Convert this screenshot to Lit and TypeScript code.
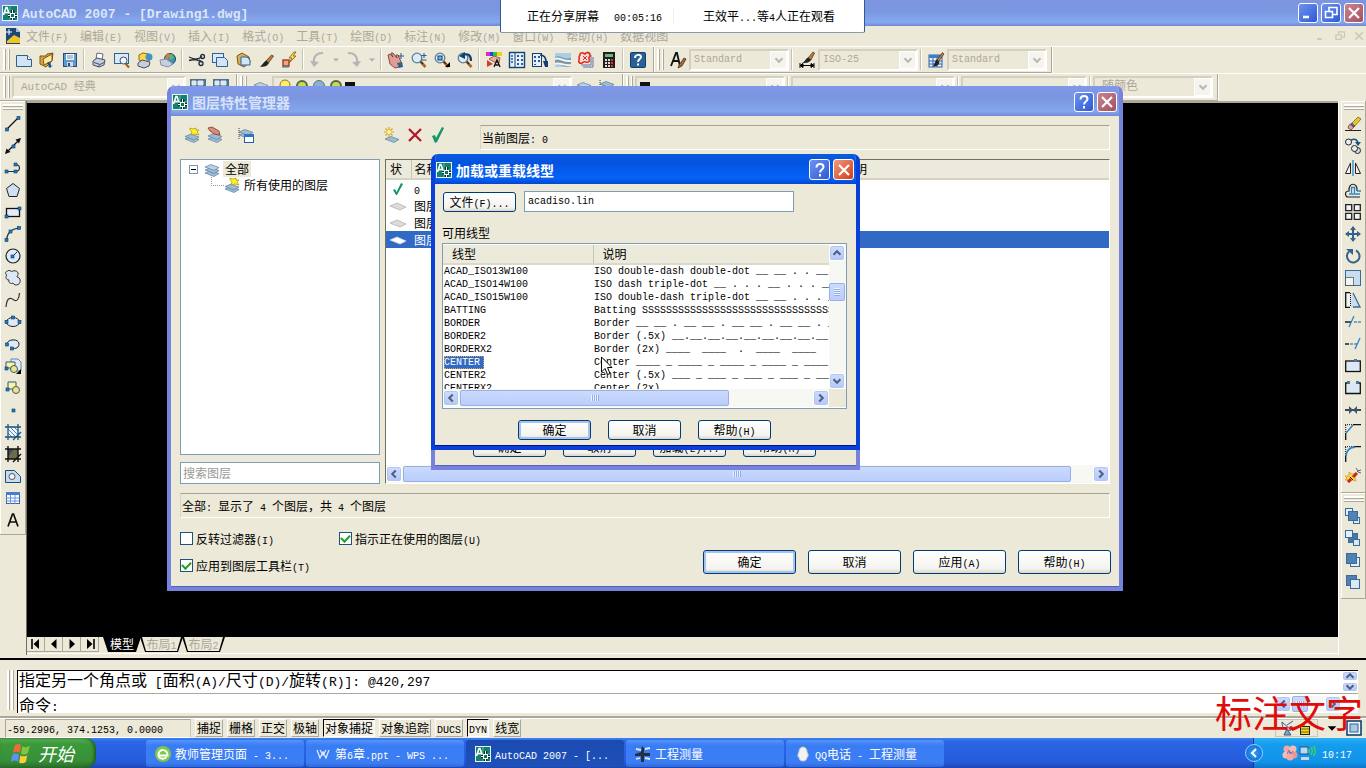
import { LitElement, html, svg, css } from "lit";
import { customElement } from "lit/decorators.js";
import { classMap } from "lit/directives/class-map.js";

/* Latin runs use the narrow fixed-width face, everything else the CJK face. */
const t = (s: string) =>
  s
    .split(/([\x20-\x7e]+)/)
    .filter(Boolean)
    .map((p) => (/^[\x20-\x7e]/.test(p) ? html`<span class="l">${p}</span>` : p));

const N = "#0b3a66";
const dot = (x: number, y: number) =>
  svg`<rect x=${x} y=${y} width="3" height="3" fill="#1b7fc4" stroke=${N} stroke-width=".6"/>`;
const sheet = (x: number, y: number, w: number, h: number) =>
  svg`<rect x=${x} y=${y} width=${w} height=${h} fill="#dbe9fa" stroke="#2e6295"/>`;
const lens = (extra: unknown) => svg`
  <path d="M9 9l5.500 6" stroke="#a8672a" stroke-width="2.600"/><path d="M9 9l3 3" stroke="#3b2a1a" stroke-width="1.200"/>
  <circle cx="6" cy="6" r="4.800" fill="#dcebf8" stroke="#5d7f96" stroke-width="1.300"/>${extra}`;
const brush = svg`<path d="M8 9l6.500-8.500 1.500 1.500-6 8z" fill="#c07a3c" stroke="#4a2c12" stroke-width=".7"/><path d="M9 7.500l2.500 2.500c-1 4-4 5-7 4.500 2-1 2-5 4.500-7z" fill="#222"/>`;
const layer = (y: number, f = "#9dbbd6", s = "#5c7f9e") =>
  svg`<path d=${`M1 ${y}l6-2.500 8 3-5 3z`} fill=${f} stroke=${s} stroke-width=".7"/>`;
const burst = svg`<path d="M6 1l3 1 3-1v2h3l-2 2 2 3-4-1-4 1 1-3-2-2z" fill="#fff02a" stroke="#a89400" stroke-width=".7"/>`;
const cube = (x: number, y: number, s: number, f: string) =>
  svg`<rect x=${x} y=${y} width=${s} height=${s} fill=${f} stroke="#3b6c99"/>`;

const art: Record<string, unknown> = {
  acad: svg`<rect x=".5" y=".5" width="15" height="15" fill="#14806f" stroke="#e8f4f0"/><path d="M8 1v14M1 8h14" stroke="#5fd0bd" stroke-width=".8"/>
    <path d="M1.500 10L4 2.500h1l2.500 7.500M2.500 7.500h4.500" stroke="#fff" stroke-width="1.600" fill="none"/><path d="M10.500 5v10M6 10.500h9" stroke="#06312c" stroke-width="3.600"/><path d="M10.500 5v10M6 10.500h9" stroke="#fff"/><rect x="8.500" y="8.500" width="4" height="4" fill="#0e6f62" stroke="#fff"/>`,
  dwg: svg`<path d="M1 0h10l4 4v12H1z" fill="#1c4878"/><path d="M11 0l4 4h-4z" fill="#9fc0dc"/><path d="M4 1v6M1 4h6" stroke="#fff"/><path d="M2 13l7-6 6 3v5H2z" fill="#f2c422"/>`,
  new: svg`<path d="M.5 3.500h11l4 4v7H.5z" fill="#d2e4f5" stroke="#315f89"/><path d="M11.500 3.500v4h4" fill="#fff" stroke="#315f89"/>`,
  open: svg`<path d="M1 4h6l1-2 6-1-1 8-6 6-6-3z" fill="#d9a845" stroke="#7b5716"/><path d="M4 7l9-5v7l-8 4z" fill="#ffe79c" stroke="#7b5716"/><path d="M8 11c2-2 4-1 4 3l2-1-3 3-3-3 2 1" fill="#1d5182"/>`,
  save: svg`<rect x="1.500" y="1.500" width="13" height="13" fill="#5f9ace" stroke="#234f7c"/><rect x="4" y="2" width="8" height="6" fill="#edf5fc"/><path d="M5 4h6M5 6h6" stroke="#88a"/><rect x="5" y="10" width="6" height="4.500" fill="#cfdceb"/><rect x="6" y="11" width="2" height="3" fill="#234f7c"/>`,
  print: svg`<path d="M5 7l1-6 6 1-1 6z" fill="#fff" stroke="#668"/><path d="M2 9l4-3 8 2-1 5-5 2-6-2z" fill="#c6cee0" stroke="#47506b"/><path d="M3 10.500l6 2 4-2M8 13v2" stroke="#47506b" fill="none"/>`,
  preview: svg`${sheet(0.5, 1.5, 14, 10)}<path d="M11 11l4 4.500" stroke="#9a5b27" stroke-width="2"/><circle cx="9.500" cy="8.500" r="3.500" fill="#f3f8fd" stroke="#38566f"/>`,
  publish: svg`<path d="M2 3l4-2 6 1 1 6-6 3-5-3z" fill="#ffd744" stroke="#8a6b0b"/><circle cx="12" cy="5" r="3.500" fill="#3d94c6"/><path d="M1 11l4-3 8 2-1 4-5 2-6-2z" fill="#c6cee0" stroke="#47506b"/>`,
  globe: svg`<circle cx="10" cy="7" r="5.500" fill="#3795bb" stroke="#246"/><path d="M8 3l4-1 2 4-4 2z" fill="#68b35c"/><path d="M7 1l3 1-3 6-2-1z" fill="#e2773b"/><path d="M0 8l6-1 7 5-5 3-7-2z" fill="#c6cee0" stroke="#8790a8"/>`,
  cut: svg`<path d="M0 5l10 4M0 8.500l10-2M10 6.500l3-2M10 8l3 2" stroke="#1c2b3d" stroke-width="1.300"/><circle cx="13.500" cy="4.500" r="2" fill="none" stroke="#1c2b3d" stroke-width="1.300"/><circle cx="12" cy="11.500" r="2" fill="none" stroke="#1c2b3d" stroke-width="1.300"/>`,
  copy: svg`${sheet(0.5, 1.5, 11, 9)}<path d="M4.500 5.500h8l3 3v6h-11z" fill="#d2e4f5" stroke="#2e6295"/>`,
  paste: svg`<path d="M2 4l5-3 7 4 1 5-6 5-6-3z" fill="#d5b25a" stroke="#7b5716"/><path d="M6 5h6l3 3v5H6z" fill="#d2e4f5" stroke="#2e6295"/>`,
  match: svg`<path d="M8 9l5.500-6 2 1-5 7z" fill="#c07a3c" stroke="#4a2c12" stroke-width=".7"/><path d="M8 8.500l3 2.500c-2 4-6 4-9 3.500 2-1 3-4 6-6z" fill="#222"/>`,
  block: svg`<rect x="2" y="8" width="6" height="6" fill="#f8a27c" stroke="#9a3f1f" stroke-width="1.400"/><path d="M1 15h7" stroke="#1b7fc4"/><path d="M13 0l-5 6h3l-3 5 7-7h-3l3-4z" fill="#ffe23c" stroke="#7b5716" stroke-width=".8"/>`,
  undo: svg`<path d="M13 1C6 1 3 5 4 12" fill="none" stroke="#b4b4b9" stroke-width="2.200"/><path d="M0 9l4 6 5-5z" fill="#b4b4b9"/>`,
  redo: svg`<path d="M2 1c7 0 10 4 9 11" fill="none" stroke="#b4b4b9" stroke-width="2.200"/><path d="M15 9l-4 6-5-5z" fill="#b4b4b9"/>`,
  down: svg`<path d="M4 6h8L8 10z" fill="#a9adb8"/>`,
  pan: svg`<path d="M0 3l2-1 3 3-2-4h2l4 5-1-3h2l4 9-3 3-4 1-5-4z" fill="#e39c93" stroke="#7a3c3a" stroke-width=".9"/><path d="M9 11l5-1 1 5-4 1z" fill="#2b6196"/><path d="M13 1v6M10 4h6" stroke="#23588e"/>`,
  zoomrt: lens(svg`<path d="M13 1v5M10.500 3.500h5M10.500 8h5" stroke="#23588e"/>`),
  zoomwin: lens(svg`<rect x="4" y="4" width="4" height="4" fill="#7fb0da" stroke="#0f3c68"/><path d="M11 15h5v-5z" fill="#000"/>`),
  zoomprev: lens(svg`<path d="M14 9C14 3 11 1 6 3" fill="none" stroke="#133f6d" stroke-width="2.200"/><path d="M8 0L2 4l6 3z" fill="#133f6d"/>`),
  props: svg`<path d="M0 0h4v4H0z" fill="#e325c8"/><path d="M4 0h3v4H4z" fill="#2440e8"/><path d="M7 0h4v4H7z" fill="#2cc843"/><path d="M11 0h5v4h-5z" fill="#f4d019"/><path d="M3 7l5-3 6 2-1 5-5-1z" fill="#eab39e" stroke="#7a4a3a" stroke-width=".8"/><path d="M1 8l6 4-6 3z" fill="#d63a2d"/><path d="M8 15l3-7 3 7M9.500 13h3" stroke="#111" stroke-width="1.300" fill="none"/>`,
  dcenter: svg`<rect x=".5" y=".5" width="15" height="15" fill="#e8f1fb" stroke="#173f70" stroke-width="1.400"/><path d="M6 1v14" stroke="#173f70"/><path d="M2 4h2M2 7h2M2 10h2" stroke="#1b5f9c" stroke-width="1.500"/><path d="M8 3h2v2H8zM12 3h2v2h-2zM8 7h2v2H8zM12 7h2v2h-2zM8 11h2v2H8zM12 11h2v2h-2z" fill="#1b5f9c"/>`,
  tools: svg`<rect x=".5" y="1.500" width="9" height="13" fill="#e8f1fb" stroke="#173f70"/><path d="M2 4h2v2H2zM2 8h2v2H2zM6 4h2v2H6zM6 8h2v2H6zM2 12h2v1H2z" fill="#1b5f9c"/><path d="M8 3c4 0 6 2 6 7" stroke="#173f70" stroke-width="1.700" fill="none"/><path d="M11 9h5v6h-3z" fill="#173f70"/>`,
  sheets: svg`<rect y="1" width="16" height="14" fill="#a9cfe5"/><path d="M0 5c5-3 8 3 16 1v8c-7 3-10-3-16-1z" fill="#7d98a4"/><path d="M0 7c5-2 8 3 16 2M0 12c5-2 8 2 16 1" stroke="#f1f5f7" stroke-width="2" fill="none"/>`,
  markup: svg`<path d="M5 15h10V5M3 13h10V3" stroke="#5f6ea8" fill="none"/><path d="M2 2c2-3 4 0 5 0 1-2 5-2 5 1s-2 2-1 4 0 4-3 3-2 0-4 1-4-1-3-3-1-3 1-5z" fill="#ffdcd6" stroke="#e12b22" stroke-width="1.600"/><path d="M5 4l4 4M9 4L5 8" stroke="#e12b22"/>`,
  calc: svg`<rect x="2" y="0" width="12" height="16" fill="#201d1d"/><rect x="4" y="2" width="8" height="3" fill="#63bb73"/><path d="M4 7h2v2H4zM7 7h2v2H7zM4 10h2v2H4zM7 10h2v2H7zM4 13h2v2H4zM7 13h2v2H7z" fill="#ddd"/><path d="M10 7h2v2h-2zM10 10h2v2h-2zM10 13h2v2h-2z" fill="#d33"/>`,
  help: svg`<rect x=".5" y=".5" width="15" height="15" rx="1" fill="#2a6098" stroke="#123d69"/><path d="M5 6c0-4 6-4 6-1 0 2-3 2-3 5M8 11.500v2" stroke="#fff" stroke-width="2" fill="none"/>`,
  textstyle: svg`<path d="M1 14L6 1h1l3 13M3 9h6" stroke="#111" stroke-width="1.800" fill="none"/><path d="M9 13l5-7 2 1-4 7-4 2z" fill="#a96a33" stroke="#33200f" stroke-width=".7"/>`,
  dimstyle: svg`<path d="M1 11v5M15 11v5M1 13.500h14M4 11.500l-3 2 3 2zM12 11.500l3 2-3 2z" stroke="#000" fill="#000"/><path d="M9 6l5-6 1.500 1L12 8z" fill="#c07a3c" stroke="#4a2c12" stroke-width=".7"/><path d="M9 5.500l3 2.500c-2 3-5 3-9 3 3-1 3-4 6-5.500z" fill="#222"/>`,
  tabstyle: svg`<rect x="1" y="3" width="13" height="12" fill="#e7f0fb" stroke="#2c64ab"/><path d="M1 3h13v3H1z" fill="#3f7dc6"/><path d="M1 9h13M1 12h13M5 6v9M9 6v9" stroke="#2c64ab"/>${brush}`,
  gear: svg`<rect width="16" height="16" fill="#4d7292"/><path d="M2 2h4v4H2zM8 2h5v4H8zM3 9h10" fill="#dce8f2" stroke="#dce8f2"/>`,
  line: svg`<path d="M2 13L13 2" stroke="#111" stroke-width="1.200"/>${dot(0.5, 12)}${dot(12, 0.5)}`,
  xline: svg`<path d="M1 15L15 1" stroke="#111" stroke-width="1.200"/><path d="M0 16l1.500-5.500L5.500 14zM16 0l-5.500 1.500L14 5.500z" fill="#111"/>${dot(7, 7)}`,
  pline: svg`<path d="M1 11.500h9c6 0 6-7 0-7" stroke="#234" fill="none" stroke-width="1.200"/>${dot(0, 10)}${dot(9, 10)}${dot(9, 3)}`,
  polygon: svg`<path d="M8 1.500l6.500 5-2.500 8H4l-2.500-8z" fill="#cfe0f4" stroke="#222"/>`,
  rect: svg`<rect x="1.500" y="4.500" width="13" height="8" fill="#e3edf9" stroke="#111" stroke-width="1.300"/>${dot(0, 11)}${dot(13, 3)}`,
  arc: svg`<path d="M1.500 14C2 7 6 3 14 2" stroke="#333" fill="none" stroke-width="1.200"/>${dot(0, 12.5)}${dot(4, 4)}${dot(12.5, 0.5)}`,
  circle: svg`<circle cx="8" cy="8" r="7" fill="#dfeaf8" stroke="#222" stroke-width="1.200"/><path d="M8 8l4-4" stroke=${N}/>${dot(6, 7)}`,
  cloud: svg`<path d="M2.500 1c2-1.500 3.500 0 4 1 1-2 6-1.500 6.500 1 .5 2-1 3-1 4 3.500 0 4.500 6 1 7.500-2 1-4 .5-5-1.500-2 1-5 0-4-3-3 0-4-3-2-5-2.500-1-1.500-3.500.5-4z" fill="#dce8f6" stroke="#333"/>`,
  spline: svg`<path d="M1 15C2 4 6 6 9 8s5-1 5.500-7" fill="none" stroke="#333" stroke-width="1.200"/>`,
  ellipse: svg`<ellipse cx="8" cy="8" rx="6.500" ry="4.500" fill="#dfeaf8" stroke="#222"/>${dot(0, 6.5)}${dot(13, 6.5)}${dot(6.5, 2)}`,
  earc: svg`<path d="M2 8c0-5 12-6 12 0 0 5-6 5-7 4" fill="#dfeaf8" stroke="#222"/>${dot(0.5, 7)}${dot(5.5, 11)}`,
  insert: svg`<path d="M6 1h7l3 3v9H6z" fill="#dbe9fa" stroke="#5c86ab"/><path d="M1 4h9v6H1z" fill="#fbf3a0" stroke="#2a5a85"/><circle cx="9" cy="11" r="3.500" fill="#e6e690" stroke="#555"/><path d="M11 16h5v-5z" fill="#000"/>${dot(0, 9)}`,
  makeblk: svg`<path d="M3 2h8v7H3z" fill="#fbf3a0" stroke="#2a5a85"/><circle cx="11" cy="10" r="3.500" fill="#e6e690" stroke="#555"/>${dot(1, 8)}`,
  point: svg`${dot(7, 7)}`,
  hatch: svg`<rect x="3" y="3" width="10" height="10" fill="#eef5fc"/><path d="M3 5l8 8M3 9l4 4M5 3l8 8M9 3l4 4" stroke="#4e88bb"/><path d="M3 0v16M13 0v16M0 3h16M0 13h16M8 16l8-8" stroke="#1b5480" stroke-width="1.300"/>`,
  gradient: svg`<rect x="3" y="3" width="10" height="10" fill="#6f6c4c"/><path d="M3 3h6L3 11z" fill="#404c63"/><path d="M3 0v16M13 0v16M0 3h16M0 13h16M8 16l8-8" stroke="#111" stroke-width="1.400"/>`,
  region: svg`<path d="M.5 2.500h9l6 6v6H.5z" fill="#c8dbf0" stroke="#1b4d7c"/><circle cx="7" cy="8.500" r="3" fill="#eef5fc" stroke="#555"/>`,
  table: svg`<rect x="1.500" y="2.500" width="13" height="11" fill="#fff" stroke="#3563b5"/><path d="M1 2h14v3H1z" fill="#4a7cd0"/><path d="M1 8h13M1 11h13M5.500 5v9M10 5v9" stroke="#6a93d6"/>`,
  mtext: svg`<path d="M3 14.500L7.500 2h1L13 14.500M4.500 10h7" stroke="#111" stroke-width="1.700" fill="none"/>`,
  erase: svg`<path d="M0 14.500h16" stroke="#222"/><path d="M6 8l7-7 3 2-7 8z" fill="#e7c42c" stroke="#6b570d" stroke-width=".7"/><path d="M4 9l3-2 3 3-4 4-3-2z" fill="#f19a92" stroke="#6b3a36" stroke-width=".7"/><path d="M6 8l3 3" stroke="#2e6295" stroke-width="2"/>`,
  copyobj: svg`<circle cx="3.500" cy="4" r="3" fill="#e8f0f8" stroke="#222"/><circle cx="12.500" cy="12.500" r="3" fill="#ccdcec" stroke="#222"/><circle cx="9.500" cy="10.500" r="3" fill="#e8f0f8" stroke="#222"/><path d="M6 2c4-2 7 0 7 4" fill="none" stroke="#1d4f82" stroke-width="1.500"/><path d="M10 4h6l-3 4z" fill="#1d4f82"/>`,
  mirror: svg`<path d="M5.500 3v10.500h-5zM10.500 3v10.500h5z" fill="#eef3f8" stroke="#222"/><path d="M8 0v16" stroke="#2785cc" stroke-width="1.300"/>`,
  offset: svg`<path d="M15 15H3C0 15-1 9 4 9c-1-9 9-9 8 0" fill="none" stroke="#222" stroke-width="1.200"/><path d="M15 12H4M12 9h4M6.500 11V5.500h3V11" fill="none" stroke="#2785cc" stroke-width="1.300"/>`,
  array: svg`<path d="M.7.7h6v6h-6zM9.300.7h6v6h-6zM.7 9.300h6v6h-6zM9.300 9.300h6v6h-6z" fill="#eef3f8" stroke="#222" stroke-width="1.300"/>`,
  move: svg`<path d="M8 1v14M1 8h14" stroke="#33628c" stroke-width="2"/><path d="M8 0l3 4H5zM8 16l3-4H5zM0 8l4-3v6zM16 8l-4-3v6z" fill="#33628c"/>`,
  rotate: svg`<path d="M11 2.500a6.300 6.300 0 1 1-7 1" fill="none" stroke="#33628c" stroke-width="2"/><path d="M1 1h7v6z" fill="#33628c"/>`,
  scale: svg`<rect x=".5" y=".5" width="15" height="15" fill="#c9ddf0" stroke="#3b6c99"/><rect x=".5" y="7.500" width="8" height="8" fill="#f4f4f0" stroke="#111" stroke-dasharray="1 1"/>`,
  stretch: svg`<path d="M5 .7H.7v14.600H5" fill="#eef3f8" stroke="#111" stroke-width="1.300"/><path d="M7 1l8 14H6z" fill="#c9ddf0"/><path d="M5.500 1v14" stroke="#111" stroke-dasharray="1 1"/><path d="M8 1l7 14H8" fill="none" stroke="#3b6c99" stroke-width="1.300"/>`,
  trim: svg`<path d="M0 8h6" stroke="#111" stroke-width="1.400"/><path d="M9 8h7" stroke="#1d5c99" stroke-dasharray="3 1"/><path d="M4 13l5-11" stroke="#2785cc" stroke-width="1.300"/>`,
  extend: svg`<path d="M0 8h4" stroke="#111" stroke-width="1.400"/><path d="M5 8h7" stroke="#1d5c99" stroke-dasharray="3 1"/><path d="M10 13l5-11" stroke="#2785cc" stroke-width="1.300"/>`,
  break1: svg`<rect x=".7" y="3" width="14.600" height="10.500" fill="#dce8f5" stroke="#111" stroke-width="1.300"/><rect x="9" y="1" width="3" height="3" fill="#4678a5"/>`,
  break2: svg`<path d="M3 3H.7v10.500h14.600V3H13" fill="#dce8f5" stroke="#111" stroke-width="1.300"/><rect x="2" y="1" width="3" height="3" fill="#4678a5"/><rect x="11" y="1" width="3" height="3" fill="#4678a5"/>`,
  join: svg`<path d="M0 8h16" stroke="#111" stroke-width="1.500"/><path d="M4 4l4 4-4 4zM12 4L8 8l4 4z" fill="#33557a"/>`,
  chamfer: svg`<path d="M0 .7h8M.7 1v8" stroke="#111" stroke-dasharray="1 1"/><path d="M8 .7h8M.7 9v7" stroke="#111" stroke-width="1.300"/><path d="M1 9l7-8" stroke="#2785cc" stroke-width="1.500"/>`,
  fillet: svg`<path d="M0 .7h8M.7 1v8" stroke="#111" stroke-dasharray="1 1"/><path d="M8 .7h8M.7 9v7" stroke="#111" stroke-width="1.300"/><path d="M1 10c0-5 4-9 9-9" fill="none" stroke="#2785cc" stroke-width="1.800"/>`,
  explode: svg`<path d="M0 8l4 0 0-4 3 2 4-1-1 4 1 4-4-1-3 3-1-3-3 0 2-2z" fill="#ffd838" stroke="#e08a3a" stroke-width=".7"/><path d="M3 14l3-3M8 9l4-4" stroke="#c32a1d" stroke-width="3"/><path d="M5 9l3 3" stroke="#222"/><path d="M11 0l2 3 3-1M13 4l3 1M12 4l2-2" stroke="#567" fill="none"/>`,
  front: svg`${cube(0.5, 0.5, 7, "#e6eef6")}${cube(8.5, 9.5, 6, "#dbe9f4")}${cube(3.5, 3.5, 9, "#5184b6")}`,
  back: svg`${cube(3.5, 3.5, 9, "#4778a8")}${cube(0.5, 0.5, 7, "#e6eef6")}${cube(8.5, 9.5, 6, "#dbe9f4")}`,
  above: svg`${cube(5.5, 5.5, 9, "#e6eef6")}${cube(1.5, 1.5, 10, "#4f81b3")}`,
  under: svg`${cube(1.5, 1.5, 10, "#4f81b3")}${cube(5.5, 5.5, 9, "#dbe9f4")}`,
  layers: svg`${layer(12)}${layer(9)}${layer(6, "#b9d0e5")}`,
  layersY: svg`${layer(12)}${layer(9.5)}${burst}`,
  layersH: svg`${layer(12)}${layer(9)}<path d="M1 1l4-1 7 4 1 4-6-1-4-3z" fill="#d98a7a" stroke="#7b3a32" stroke-width=".8"/>`,
  layersW: svg`${layer(8)}${layer(5)}<path d="M1 1v12" stroke="#444" stroke-dasharray="1 1"/><rect x="6.500" y="7.500" width="9" height="8" fill="#fff" stroke="#1d5eae"/><path d="M6 7h10v3H6z" fill="#2f74c7"/>`,
  layerNew: svg`${layer(12)}<path d="M5 0v10M0 5h10M1.500 1.500l7 7M8.500 1.500l-7 7" stroke="#d9a514" stroke-width="1.200"/><circle cx="5" cy="5" r="2" fill="#fff7a6"/>`,
  del: svg`<path d="M2 2l12 12M14 2L2 14" stroke="#b01a2a" stroke-width="2.300"/>`,
  ok: svg`<path d="M2 9l3-1 1 3L12 0l2 1-7 14-2 1z" fill="#12966a"/>`,
  okS: svg`<path d="M3 9l2-1 1.500 3L11 2l2 1-6 11H6z" fill="#12966a"/>`,
  flat: svg`<path d="M0 8l7-3 9 4-6 3z" fill="#dcdcdc" stroke="#aaa" stroke-width=".7"/>`,
  flatW: svg`<path d="M0 8l7-3 9 4-6 3z" fill="#fff" stroke="#dde" stroke-width=".7"/>`,
  min: svg`<path d="M3 12h6" stroke="currentColor" stroke-width="2.600"/>`,
  max: svg`<path d="M6 6V2.500h8v7h-4" fill="none" stroke="currentColor" stroke-width="1.600"/><path d="M2.500 6.500h7v6h-7z" fill="none" stroke="currentColor" stroke-width="1.600"/>`,
  close: svg`<path d="M3 3l10 10M13 3L3 13" stroke="currentColor" stroke-width="2.200"/>`,
  ask: svg`<path d="M4.500 5.500c0-5 7-4.500 7-.500 0 2.500-3.500 2.500-3.500 5.500M8 12v2.500" stroke="currentColor" stroke-width="2" fill="none"/>`,
  up: svg`<path d="M4 10l4-4 4 4" stroke="#4d6185" stroke-width="2.400" fill="none"/>`,
  dn: svg`<path d="M4 6l4 4 4-4" stroke="#4d6185" stroke-width="2.400" fill="none"/>`,
  lt: svg`<path d="M10 4L6 8l4 4" stroke="#4d6185" stroke-width="2.400" fill="none"/>`,
  rt: svg`<path d="M6 4l4 4-4 4" stroke="#4d6185" stroke-width="2.400" fill="none"/>`,
  chev: svg`<path d="M4 6l4 4 4-4" stroke="#bbb9ab" stroke-width="2.400" fill="none"/>`,
  first: svg`<path d="M4 3v10" stroke="#000" stroke-width="1.600"/><path d="M11 3v10L5.500 8z"/>`,
  prev: svg`<path d="M10.500 3v10L5 8z"/>`,
  next: svg`<path d="M5.500 3v10L11 8z"/>`,
  last: svg`<path d="M12 3v10" stroke="#000" stroke-width="1.600"/><path d="M5 3v10l5.500-5z"/>`,
  ie: svg`<circle cx="8" cy="8" r="8" fill="#7cc84a"/><path d="M3.500 9.500h9c0-7-9-7-9-1 0 5 6 5 8 2.500" fill="none" stroke="#fff" stroke-width="2"/>`,
  wps: svg`<path d="M2 4l3 8 3-6 3 6 3-8M5 4l3 5 3-5" stroke="#e8eefc" fill="none" stroke-width="1.200"/>`,
  eng: svg`<path d="M7 0l2 2v5h6v3H9v6H6v-6H0V8l6-2z" fill="#223046"/><path d="M1 3l5 1M10 3l5-1M10 12l5 1M1 13l4-1" stroke="#dfe7f0" stroke-width="1.800"/>`,
  qq: svg`<path d="M8 1c3 0 4 3 4 5 2 4 1 5 0 5 0 2-1 4-4 4s-4-2-4-4c-1 0-2-1 0-5 0-2 1-5 4-5z" fill="#f3f3ef" stroke="#c8ccd8"/>`,
  flower: svg`<circle cx="5" cy="4" r="3.500" fill="#f3a9a6"/><circle cx="11" cy="4" r="3.500" fill="#f7bdb4"/><circle cx="4" cy="10" r="3.500" fill="#f7bdb4"/><circle cx="12" cy="10" r="3.500" fill="#ee9393"/><circle cx="8" cy="12" r="3.500" fill="#f3a9a6"/><path d="M5 9l2-4 2 4 2-3" stroke="#8a6fb0" fill="none"/>`,
  net: svg`<rect x="1" y="2" width="8" height="7" fill="#b8d8f4" stroke="#20538e"/><path d="M2 12h8v3H2z" fill="#cfd6e2"/><path d="M10 4v4M12 2.500c1.500 2 1.500 5 0 7M14.500 1c2 3 2 7 0 10" stroke="#43d453" stroke-width="1.400" fill="none"/>`,
  dish: svg`<path d="M3 2c0 7 4 9 9 8z" fill="#dfe8f2" stroke="#34577d"/><path d="M8 5l6-4M8 9l-3 6h7z" stroke="#34577d" fill="#8aa6c4"/><circle cx="12" cy="8" r="2" fill="#d22"/>`,
  lock: svg`<path d="M6 7V4c0-4 8-4 8 0v2" stroke="#a68a10" stroke-width="1.600" fill="none"/><rect x="2.500" y="6.500" width="9" height="8" fill="#f1d420" stroke="#222"/><path d="M3 9h8M3 12h8" stroke="#7a6408"/>`,
  tri: svg`<path d="M3 6h10l-5 5z"/>`,
  clean: svg`<rect x="1" y="1" width="14" height="14" fill="#eef6fc" stroke="#12426f" stroke-width="1.600"/><rect x="4" y="4" width="8" height="8" fill="#a9c9e2" stroke="#2e6295"/>`,
  bulb: svg`<circle cx="8" cy="6" r="5" fill="#ffee70" stroke="#8a7b18"/>`,
  sun: svg`<circle cx="8" cy="7" r="5" fill="#cfd94c" stroke="#506a4a" stroke-width="2"/>`,
  frz: svg`<circle cx="8" cy="7" r="5.500" fill="#8fb2c8" stroke="#54788f"/>`,
  flag: svg`<path d="M3 2c2-1.500 4-1.500 5 0L7 8C5 6.500 3.500 7 1.500 8z" fill="#ef6a35"/><path d="M9 2.500c2 1.500 4 1 6-.5L13.500 8c-2 1.500-4 1.500-5.500.5z" fill="#81c63e"/><path d="M1 9.500C3 8 5 8 6.500 9.500L5.500 15C4 13.500 2 14 0 15z" fill="#5b93ee"/><path d="M7.500 10c2 1 4 1 5.500-.5L12 15c-2 1.500-4 1.500-5.500.5z" fill="#fccc3b"/>`,
};
const ic = (n: string, size = 16) =>
  html`<svg class="ic" viewBox="0 0 16 16" width=${size} height=${size} fill="none" aria-hidden="true"><g fill="#000">${art[n]}</g></svg>`;
const ib = (n: string) => html`<button class="ib" aria-label=${n}>${ic(n)}</button>`;
const sb = (n: string) => html`<button class="sb" aria-label=${n}>${ic(n, 14)}</button>`;
const sep = html`<i class="sep"></i>`;
const combo = (cls: string, label: string, value: string) => html`
  <div class="combo ${cls}"><select aria-label=${label}><option>${value}</option></select><span class="drop">${ic("chev", 14)}</span></div>`;

const MENUS = ["文件(F)", "编辑(E)", "视图(V)", "插入(I)", "格式(O)", "工具(T)", "绘图(D)", "标注(N)", "修改(M)", "窗口(W)", "帮助(H)", "数据视图"];
const STD = [["new", "open", "save"], ["print", "preview", "publish", "globe"], ["cut", "copy", "paste", "match", "block"]];
const DRAW = ["line", "xline", "pline", "polygon", "rect", "arc", "circle", "cloud", "spline", "ellipse", "earc", "insert", "makeblk", "point", "hatch", "gradient", "region", "table", "mtext"];
const MODIFY = ["erase", "copyobj", "mirror", "offset", "array", "move", "rotate", "scale", "stretch", "trim", "extend", "break1", "break2", "join", "chamfer", "fillet", "explode"];
const ORDER = ["front", "back", "above", "under"];
const LINETYPES: [string, string][] = [
  ["ACAD_ISO13W100", "ISO double-dash double-dot __ __ . . __ __ . . _"],
  ["ACAD_ISO14W100", "ISO dash triple-dot __ . . . __ . . . __ . . . _"],
  ["ACAD_ISO15W100", "ISO double-dash triple-dot __ __ . . . __ __ . ."],
  ["BATTING", "Batting SSSSSSSSSSSSSSSSSSSSSSSSSSSSSSSSSSSSSSSSSSS"],
  ["BORDER", "Border __ __ . __ __ . __ __ . __ __ . __ __ ."],
  ["BORDER2", "Border (.5x) __.__.__.__.__.__.__.__.__.__.__."],
  ["BORDERX2", "Border (2x) ____  ____  .  ____  ____  .  ___"],
  ["CENTER", "Center ____ _ ____ _ ____ _ ____ _ ____ _ ____"],
  ["CENTER2", "Center (.5x) ___ _ ___ _ ___ _ ___ _ ___ _ ___"],
  ["CENTERX2", "Center (2x) ________  __  ________  __  _____"],
];
const STATUS: [string, boolean][] = [["捕捉", false], ["栅格", false], ["正交", false], ["极轴", false], ["对象捕捉", true], ["对象追踪", false], ["DUCS", false], ["DYN", true], ["线宽", false]];
const TASKS: [string, string, boolean][] = [["ie", "教师管理页面 - 3...", false], ["wps", "第6章.ppt - WPS ...", false], ["acad", "AutoCAD 2007 - [...", true], ["eng", "工程测量", false], ["qq", "QQ电话 - 工程测量", false]];

const shared = css`
  * { box-sizing: border-box; }
  :host { font: 12px/16px "Noto Sans CJK SC", sans-serif; color: #000; }
  .l { font-family: "Liberation Mono", monospace; font-size: var(--latin, 10px); line-height: 0; white-space: pre; }
  .ic { display: block; flex: none; overflow: visible; }
  button, input, select { font: inherit; color: inherit; margin: 0; border-radius: 0; }
  button { padding: 0; white-space: nowrap; }
  .ib { border: 0; background: none; display: flex; align-items: center; justify-content: center; flex: none; }
  .sb { width: 16px; height: 16px; flex: none; border: 1px solid #fff; border-radius: 3px; background: linear-gradient(#cfdcfd, #b4c7f5); box-shadow: inset 0 0 0 1px #b3c6f1; display: flex; align-items: center; justify-content: center; overflow: hidden; }
  .hs { display: flex; height: 18px; gap: 1px; align-items: center; background: #f7f7f3; }
  .thumb { height: 16px; border: 1px solid #98b0e8; border-radius: 2px; background: linear-gradient(#cbdafe, #bacdfa); display: flex; align-items: center; justify-content: center; flex: none; }
  .grip { width: 8px; height: 6px; background: repeating-linear-gradient(90deg, #eef4fe 0 1px, #8fabea 1px 2px); }
  .grip.v { width: 6px; height: 8px; background: repeating-linear-gradient(#eef4fe 0 1px, #8fabea 1px 2px); }
  .tbtn { width: 20px; height: 20px; border: 1px solid #fff; border-radius: 3px; color: #fff; display: flex; align-items: center; justify-content: center; background: linear-gradient(135deg, #6c93f0, #2f59d6); }
  .tbtn.x { background: linear-gradient(135deg, #c98591, #a44f60); }
  .btn { height: 20px; border: 1px solid #003c74; border-radius: 3px; background: linear-gradient(#fff, #f4f3ee 80%, #dbd7ca); text-align: center; }
  .btn.def { box-shadow: inset 0 0 0 2px #a9c3f0; }
  .win { display: flex; flex-direction: column; background: #ece9d8; border: 4px solid #7583dc; border-top: 0; border-radius: 7px 7px 0 0; overflow: hidden; box-shadow: inset 0 -1px #5960b8; }
  .cap { height: 30px; flex: none; margin: 0 -4px; padding: 1px 6px 0 5px; display: flex; align-items: center; gap: 4px; background: linear-gradient(#8098e8, #7b96e0 40%, #84a6ec 85%, #7189db); color: #d6e2fa; font-weight: 700; font-size: 14px; --latin: 13px; }
  .cap h2 { flex: 1; font: inherit; margin: 0; }
  .cap .tbtn + .tbtn { margin-left: -1px; }
  table { border-collapse: collapse; table-layout: fixed; width: 100%; }
  th, td { padding: 0; text-align: left; font-weight: 400; white-space: nowrap; overflow: hidden; }
`;

@customElement("layer-manager")
export class LayerManager extends LitElement {
  static styles = [shared, css`
    :host { display: block; }
    .win { height: 100%; }
    .body { flex: 1; display: flex; flex-direction: column; padding: 9px 9px 13px; }
    .tools { display: flex; align-items: flex-start; height: 26px; }
    .tools .ib { width: 23px; height: 20px; }
    .tools .gap { margin-left: 8px; }
    .tools .far { margin-left: 123px; }
    .sunk { border: 1px solid; border-color: #a5a294 #fff #fff #d8d5c5; padding: 4px 1px 3px; height: 25px; }
    .cur { flex: 1; margin-left: 31px; }
    .panes { flex: 1; display: flex; gap: 5px; margin: 8px 0 9px; min-height: 0; }
    .side { width: 200px; display: flex; flex-direction: column; gap: 7px; }
    .tree { flex: 1; background: #fff; border: 1px solid #7f9db9; padding: 1px 8px; }
    .node { display: flex; align-items: center; height: 16px; }
    .node b { width: 9px; height: 9px; border: 1px solid #7f93ab; margin-right: 6px; display: flex; align-items: center; }
    .node b::before { content: ""; flex: 1; height: 1px; margin: 0 1px; background: #000; }
    .node em { font-style: normal; background: #ece9d8; padding: 0 2px; margin-left: 3px; }
    .child { padding-left: 22px; gap: 4px; }
    .child::before { content: ""; width: 12px; height: 8px; margin: -8px -4px 0 0; border: dotted #999; border-width: 0 0 1px 1px; }
    input[type="text"] { height: 22px; border: 1px solid #7f9db9; background: #fff; padding: 0 2px 2px; width: 100%; }
    input::placeholder { color: #9a9a96; }
    .list { flex: 1; background: #fff; border: 1px solid; border-color: #716f64 #fff #fff #716f64; display: flex; flex-direction: column; min-width: 0; }
    .rows { flex: 1; }
    th { background: #ebeadb; border-bottom: 2px solid #d6d2c2; height: 19px; }
    th:first-child { width: 25px; padding-left: 4px; border-right: 1px solid #c7c5b2; }
    th:nth-child(2) { width: 428px; padding-left: 3px; }
    th:last-child { padding-left: 4px; }
    td { height: 17px; line-height: 17px; }
    td:first-child { padding-left: 4px; }
    td:nth-child(2) { padding-left: 3px; }
    .sel { background: #316ac5; color: #fff; }
    .hs { margin-top: auto; }
    .hs .thumb { flex: 1; margin-right: 21px; }
    .foot { display: grid; grid-template-columns: 159px 1fr auto; padding-top: 12px; }
    .chk { display: flex; align-items: center; gap: 3px; height: 17px; }
    .chk.low { margin-top: 10px; }
    input[type="checkbox"] { appearance: none; width: 13px; height: 13px; border: 1px solid #1c5180; background: #fff; display: grid; place-items: center; }
    input[type="checkbox"]:checked::before { content: ""; width: 7px; height: 4px; border: solid #21a121; border-width: 0 0 2px 2px; transform: rotate(-45deg) translate(1px, -1px); }
    .acts { grid-column: 3; grid-row: 1 / span 2; display: flex; gap: 12px; padding-top: 20px; margin-right: -1px; }
    .acts .btn { width: 93px; height: 24px; }
  `];
  render() {
    return html`<section class="win" aria-label="图层特性管理器">
      <header class="cap">${ic("acad")}<h2>图层特性管理器</h2><button class="tbtn" aria-label="帮助">${ic("ask")}</button><button class="tbtn x" aria-label="关闭">${ic("close")}</button></header>
      <div class="body">
        <div class="tools">${ib("layersY")}${ib("layersH")}<span class="gap">${ib("layersW")}</span>
          <span class="far">${ib("layerNew")}</span>${ib("del")}${ib("ok")}
          <div class="sunk cur">${t("当前图层: 0")}</div></div>
        <div class="panes">
          <div class="side">
            <div class="tree"><div class="node"><b></b>${ic("layers")}<em>全部</em></div><div class="node child">${ic("layersY")}<span>所有使用的图层</span></div></div>
            <input type="text" placeholder="搜索图层" aria-label="搜索图层" />
          </div>
          <div class="list">
            <div class="rows"><table>
              <thead><tr><th>状</th><th>名称</th><th>说明</th></tr></thead>
              <tbody>${[["okS", "0"], ["flat", "图层1"], ["flat", "图层2"], ["flatW", "图层3"]].map(
                ([i, n], k) => html`<tr class=${classMap({ sel: k === 3 })}><td>${ic(i)}</td><td>${t(n)}</td><td></td></tr>`)}</tbody>
            </table></div>
            <div class="hs">${sb("lt")}<span class="thumb"><i class="grip"></i></span>${sb("rt")}</div>
          </div>
        </div>
        <div class="sunk">${t("全部: 显示了 4 个图层，共 4 个图层")}</div>
        <div class="foot">
          <label class="chk"><input type="checkbox" /><span>${t("反转过滤器(I)")}</span></label>
          <label class="chk"><input type="checkbox" checked /><span>${t("指示正在使用的图层(U)")}</span></label>
          <label class="chk low"><input type="checkbox" checked /><span>${t("应用到图层工具栏(T)")}</span></label>
          <div class="acts"><button class="btn def">确定</button><button class="btn">取消</button><button class="btn">${t("应用(A)")}</button><button class="btn">${t("帮助(H)")}</button></div>
        </div>
      </div>
    </section>`;
  }
}

@customElement("linetype-loader")
export class LinetypeLoader extends LitElement {
  static styles = [shared, css`
    :host { display: block; }
    .win { height: 100%; border-color: #0a3fd8; box-shadow: inset 0 -1px #00138c; }
    .cap { color: #fff; background: linear-gradient(#0a5be0, #0353e0 30%, #0663f8 80%, #0446cf); }
    .cap .tbtn { width: 21px; height: 21px; }
    .cap .x { background: linear-gradient(135deg, #f09a80, #d23c14); }
    .body { flex: 1; display: flex; flex-direction: column; padding: 7px 9px 6px 7px; }
    .file { display: flex; gap: 8px; padding-left: 1px; align-items: center; }
    .btn { width: 73px; }
    input { width: 270px; height: 21px; border: 1px solid #7f9db9; padding: 0 3px; font: 10px/16px "Liberation Mono", monospace; background: #fff; }
    .lab { margin: 13px 0 2px; }
    .box { border: 1px solid #7f9db9; background: #fff; display: grid; grid-template-columns: 1fr 17px; grid-template-rows: 144px 18px; padding: 1px 0; }
    .view { overflow: hidden; }
    th { height: 19px; background: #ebeadb; border-bottom: 2px solid #dcd9ca; padding-left: 9px; }
    th:first-child { width: 150px; border-right: 1px solid #c7c5b2; }
    td { height: 13px; font: 10px/13px "Liberation Mono", monospace; white-space: pre; padding-left: 1px; }
    mark { display: block; width: max-content; background: #316ac5; color: #fff; padding-right: 4px; outline: 1px dotted #d9a552; outline-offset: -1px; }
    .vs { display: flex; flex-direction: column; background: #f7f7f3; }
    .vs .thumb { width: 16px; height: 18px; margin: 22px 0 auto; }
    .hs .thumb { width: 269px; margin-right: auto; }
    .corner { background: #ece9d8; }
    .acts { display: flex; justify-content: center; gap: 17px; padding-top: 11px; }
  `];
  render() {
    return html`<section class="win" aria-label="加载或重载线型">
      <header class="cap">${ic("acad")}<h2>加载或重载线型</h2><button class="tbtn" aria-label="帮助">${ic("ask")}</button><button class="tbtn x" aria-label="关闭">${ic("close")}</button></header>
      <div class="body">
        <div class="file"><button class="btn">${t("文件(F)...")}</button><input aria-label="文件" .value=${"acadiso.lin"} /></div>
        <div class="lab">可用线型</div>
        <div class="box">
          <div class="view"><table>
            <thead><tr><th>线型</th><th>说明</th></tr></thead>
            <tbody>${LINETYPES.map(([n, d]) => html`<tr><td>${n === "CENTER" ? html`<mark>${n}</mark>` : n}</td><td>${d}</td></tr>`)}</tbody>
          </table></div>
          <div class="vs">${sb("up")}<span class="thumb"><i class="grip v"></i></span>${sb("dn")}</div>
          <div class="hs">${sb("lt")}<span class="thumb"><i class="grip"></i></span>${sb("rt")}</div>
          <div class="corner"></div>
        </div>
        <div class="acts"><button class="btn def">确定</button><button class="btn">取消</button><button class="btn">${t("帮助(H)")}</button></div>
      </div>
    </section>`;
  }
}

@customElement("app-root")
export class AppRoot extends LitElement {
  static styles = [shared, css`
    :host { display: block; position: relative; height: 100vh; overflow: hidden; }
    .app { height: 100%; display: grid; grid-template-rows: 26px 20px 27px 28px minmax(0, 1fr) 61px 22px 30px; grid-template-columns: minmax(0, 1fr); background: #ece9d8; }
    .title { display: flex; align-items: center; gap: 4px; padding: 0 2px; background: linear-gradient(#7c95e2, #7a97e0 45%, #86a9ee 85%, #7088d8); color: #dbe6fb; font-weight: 700; --latin: 13px; }
    .title h1 { font: inherit; margin: 0; flex: 1; }
    .title .tbtn + .tbtn { margin-left: -1px; }
    .menu { display: flex; align-items: center; padding: 0 1px 0 5px; color: #aca899; }
    .menu nav { display: flex; gap: 12px; padding-left: 5px; flex: 1; }
    .menu a { color: inherit; text-decoration: none; white-space: nowrap; }
    .mdi { display: flex; gap: 7px; color: #cbc8ba; }
    .bars { display: flex; border-top: 1px solid #fff; }
    .bar { display: flex; align-items: center; border-right: 1px solid #aca899; border-bottom: 1px solid #aca899; box-shadow: 1px 0 #fff; padding-right: 4px; }
    .bar::before { content: ""; width: 6px; align-self: stretch; margin: 2px 1px 2px 3px; border: solid #fff; border-width: 0 0 0 2px; background: linear-gradient(90deg, #aca899 0 1px, transparent 1px 3px, #fff 3px 4px, #aca899 4px 5px, transparent 5px); }
    .bar .ib { width: 23px; }
    .bar .ib.sm { width: 13px; }
    .sep { width: 6px; align-self: stretch; margin: 2px 0; background: linear-gradient(90deg, transparent 2px, #c5c2b2 2px 3px, #fff 3px 4px, transparent 4px); flex: none; }
    .combo { display: flex; align-items: center; height: 22px; border: 2px solid #d3d0c0; border-right-color: #fff; border-bottom-color: #fff; color: #aca899; width: 100px; flex: none; }
    .combo select { appearance: none; border: 0; outline: 0; background: none; flex: 1; min-width: 0; padding: 0 3px; font: 10px/16px "Liberation Mono", "Noto Sans CJK SC", monospace; }
    .combo.ws select { font-size: 11px; padding-left: 7px; }
    .drop { width: 17px; height: 18px; background: #f5f4ef; border: 1px solid #fff; display: grid; place-items: center; flex: none; }
    .ws { width: 174px; } .lay { width: 300px; } .lw { width: 150px; } .lt { width: 164px; } .pw { width: 126px; } .pc { width: 120px; }
    .combo.pc select { font-size: 12px; padding-left: 7px; }
    .licons { display: flex; gap: 1px; padding-left: 3px; align-items: center; }
    .licons i { width: 10px; height: 10px; background: #111; }
    .main { display: flex; min-height: 0; }
    .vcol { display: flex; flex-direction: column; }
    .vbar { width: 26px; padding: 15px 0 6px; display: flex; flex-direction: column; gap: 6px; align-items: center; border: solid #aca899; border-width: 0 1px 1px 0; box-shadow: inset 1px 1px #fff; background: linear-gradient(transparent 3px, #fff 3px 5px, #aca899 5px 6px, transparent 6px 7px, #fff 7px 8px, #aca899 8px 9px, transparent 9px) no-repeat 3px 0 / 20px 100%; }
    .vbar .ib { height: 16px; width: 24px; }
    .vbar.mod { width: 25px; padding-bottom: 8px; }
    .vbar.ord { padding-bottom: 8px; width: 25px; }
    .right { width: 28px; padding-left: 2px; border-left: 1px solid #fff; }
    .center { flex: 1; min-width: 0; display: flex; flex-direction: column; border-left: 1px solid #716f64; }
    .canvas { flex: 1; background: #000; border-top: 2px solid #aca899; }
    .tabs { height: 17px; display: flex; color: #aca899; border-bottom: 1px solid #fff; margin-bottom: 1px; }
    .tabs .ib { width: 18px; height: 15px; border-right: 1px solid #aca899; border-bottom: 1px solid #aca899; }
    .tab { border: 0; height: 15px; line-height: 14px; background: #000; clip-path: polygon(0 0, 100% 0, calc(100% - 5px) 100%, 5px 100%); padding: 0 1px 1px; width: 43px; display: grid; margin-right: -1px; }
    .tab > span { background: #ece9d8; clip-path: polygon(1px 0, calc(100% - 1px) 0, calc(100% - 5px) 100%, 5px 100%); display: block; }
    .tab.on { margin-left: 4px; color: #fff; width: 38px; }
    .tab.on > span { background: #000; }
    .cmd { display: flex; margin-top: 3px; border-top: 2px solid #000; padding: 10px 8px 0 7px; gap: 2px; }
    .hold { width: 8px; margin: 0 0 6px; background: linear-gradient(90deg, #fff 0 2px, #aca899 2px 3px, transparent 3px 4px, #fff 4px 6px, #aca899 6px 7px, transparent 7px); }
    .term { flex: 1; min-width: 0; background: #fff; border: solid #000; border-width: 1px 0 0 1px; font-size: 16px; line-height: 16px; --latin: 13px; display: grid; grid-template-rows: 22px 20px; height: 43px; }
    .term > div { display: flex; padding-left: 1px; min-width: 0; }
    .term > div + div { border-top: 1px solid #aca899; align-items: center; }
    .term .txt { flex: 1; white-space: nowrap; }
    .term label { flex: 1; display: flex; align-items: center; }
    .term label input { border: 0; outline: 0; flex: 1; height: 16px; padding: 0; background: none; }
    .pair { display: flex; flex-direction: column; gap: 1px; }
    .pair .sb { height: 10px; }
    .chs { display: flex; width: 66px; gap: 1px; margin-right: 17px; background: #f7f7f3; }
    .chs .thumb { width: 16px; margin-right: auto; }
    .stat { display: flex; align-items: center; gap: 4px; padding: 0 4px 0 5px; border-top: 2px solid #aca899; box-shadow: inset 0 1px #fff; }
    .coord { width: 186px; height: 19px; border: 1px solid; border-color: #aca899 #c9c6b8 #fff #aca899; padding: 0 1px; }
    .st { border: 1px solid; border-color: #fff #aca899 #aca899 #fff; background: none; height: 18px; line-height: 16px; padding: 0 1px; }
    .st.on { border-color: #000 #fff #fff #000; background: #f3f1e8; }
    .stray { margin-left: auto; display: flex; align-items: center; gap: 7px; }
    .stray div { display: flex; gap: 3px; width: 43px; height: 18px; border: 1px solid #c9c6b8; padding: 0 3px; }
    .task { display: flex; align-items: stretch; background: linear-gradient(#3c81f3, #2a66e6 12%, #245bdb 80%, #1b46b4); color: #fff; }
    .start { width: 96px; border: 0; border-radius: 0 10px 10px 0; background: linear-gradient(#5cae57, #3b9a3a 20%, #388f38 75%, #2a6f2b); display: flex; align-items: center; padding-left: 11px; gap: 7px; font-size: 18px; font-style: italic; box-shadow: inset -2px 0 3px #1f5e24; margin-right: 50px; }
    .tk { width: 158px; margin: 2px 2px 1px 0; border: 0; border-radius: 3px; display: flex; align-items: center; gap: 4px; padding-left: 9px; background: linear-gradient(#5595fa, #3a7cf4 20%, #3b7df2 85%, #2f68dc); }
    .tk.on { background: linear-gradient(#1b4bb0, #1e50b8); }
    .tray { margin-left: auto; width: 113px; border-left: 1px solid #0d3c90; background: linear-gradient(#2ab0f4, #159dee 20%, #1093e8 80%, #0d76c8); display: flex; align-items: center; gap: 1px; padding-right: 13px; }
    .tray button { width: 18px; height: 18px; border-radius: 50%; border: 1px solid #8fd1ff; background: radial-gradient(#2e9df6, #0d62d0); margin: 0 18px 0 -9px; color: #fff; display: grid; place-items: center; }
    .tray time { margin-left: 6px; }
    .layerdlg { position: absolute; left: 167px; top: 86px; width: 956px; height: 505px; }
    .behind { position: absolute; left: 431px; top: 400px; width: 429px; height: 70px; border-radius: 0; }
    .behind .row { display: flex; gap: 17px; justify-content: center; margin-top: auto; padding: 0 2px 9px 0; }
    .behind .btn { width: 73px; }
    .loader { position: absolute; left: 431px; top: 154px; width: 429px; height: 296px; }
    .share { position: absolute; left: 500px; top: 0; width: 365px; height: 33px; background: #fff; border: 1px solid #2d5d93; border-top: 0; border-bottom-color: #8a98ac; border-radius: 0 0 2px 2px; display: flex; align-items: center; padding-left: 26px; }
    .share > span + span { margin-left: 15px; }
    .share > .who { margin-left: 11px; padding-left: 29px; border-left: 1px solid #eee; }
    .note { position: absolute; right: 3px; top: 692px; font-size: 37px; line-height: 40px; color: #e00c0c; }
    .cursor { position: absolute; left: 600px; top: 356px; }
  `];
  render() {
    return html`
      <div class="app">
        <header class="title">${ic("acad")}<h1>${t("AutoCAD 2007 - [Drawing1.dwg]")}</h1>
          <button class="tbtn" aria-label="最小化">${ic("min")}</button><button class="tbtn" aria-label="还原">${ic("max")}</button><button class="tbtn x" aria-label="关闭">${ic("close")}</button></header>
        <div class="menu">${ic("dwg")}<nav>${MENUS.map((m) => html`<a href="#">${t(m)}</a>`)}</nav><span class="mdi">${ic("min", 12)}${ic("max", 12)}${ic("close", 12)}</span></div>
        <div class="bars">
          <div class="bar">${STD.map((g) => [g.map(ib), sep])}
            ${ib("undo")}<button class="ib sm" aria-label="放弃列表">${ic("down", 12)}</button>${ib("redo")}<button class="ib sm" aria-label="重做列表">${ic("down", 12)}</button>${sep}
            ${["pan", "zoomrt", "zoomwin", "zoomprev"].map(ib)}${sep}${["props", "dcenter", "tools", "sheets", "markup", "calc"].map(ib)}${sep}${ib("help")}</div>
          <div class="bar">${ib("textstyle")}${combo("", "文字样式", "Standard")}${sep}${ib("dimstyle")}${combo("", "标注样式", "ISO-25")}${sep}${ib("tabstyle")}${combo("", "表格样式", "Standard")}</div>
        </div>
        <div class="bars">
          <div class="bar">${combo("ws", "工作空间", "AutoCAD 经典")}${ib("gear")}${ib("gear")}</div>
          <div class="bar">${ib("layers")}<div class="combo lay"><span class="licons">${ic("bulb")}${ic("sun")}${ic("frz")}${ic("sun")}<i></i></span><select aria-label="图层"><option></option></select><span class="drop">${ic("chev", 14)}</span></div>${ib("layers")}${ib("layersW")}</div>
          <div class="bar"><div class="combo lw"><span class="licons"><i></i></span><select aria-label="颜色"><option></option></select><span class="drop">${ic("chev", 14)}</span></div>${sep}${combo("lt", "线型", "")}${sep}${combo("pw", "线宽", "")}${sep}${combo("pc", "打印样式", "随颜色")}</div>
        </div>
        <div class="main">
          <div class="vcol"><div class="vbar draw">${DRAW.map(ib)}</div></div>
          <div class="center"><div class="canvas"></div>
            <div class="tabs">${["first", "prev", "next", "last"].map(ib)}
              <button class="tab on"><span>模型</span></button><button class="tab"><span>${t("布局1")}</span></button><button class="tab"><span>${t("布局2")}</span></button></div>
          </div>
          <div class="vcol right"><div class="vbar mod">${MODIFY.map(ib)}</div><div class="vbar ord">${ORDER.map(ib)}</div></div>
        </div>
        <div class="cmd"><i class="hold"></i>
          <div class="term">
            <div><span class="txt">${t("指定另一个角点或 [面积(A)/尺寸(D)/旋转(R)]: @420,297")}</span><span class="pair">${sb("up")}${sb("dn")}</span></div>
            <div><label><span>${t("命令:")}</span><input aria-label="命令" /></label><span class="chs">${sb("lt")}<span class="thumb"><i class="grip"></i></span>${sb("rt")}</span></div>
          </div></div>
        <div class="stat"><div class="coord">${t("-59.2996, 374.1253, 0.0000")}</div>
          ${STATUS.map(([s, on]) => html`<button class=${classMap({ st: true, on })}>${t(s)}</button>`)}
          <span class="stray"><div>${ic("dish")}${ic("lock")}</div>${ic("tri", 14)}${ic("clean")}</span></div>
        <div class="task"><button class="start">${ic("flag", 20)}开始</button>
          ${TASKS.map(([i, s, on]) => html`<button class=${classMap({ tk: true, on })}>${ic(i)}<span>${t(s)}</span></button>`)}
          <div class="tray"><button aria-label="显示隐藏的图标"><svg width="8" height="10" viewBox="0 0 8 10"><path d="M6 1L2 5l4 4" stroke="#fff" stroke-width="2" fill="none" /></svg></button>${ic("flower")}${ic("net")}<time>${t("10:17")}</time></div></div>
      </div>
      <layer-manager class="layerdlg"></layer-manager>
      <div class="win behind"><div class="row"><button class="btn">确定</button><button class="btn">取消</button><button class="btn">${t("加载(L)...")}</button><button class="btn">${t("帮助(H)")}</button></div></div>
      <linetype-loader class="loader"></linetype-loader>
      <div class="share"><span>正在分享屏幕</span><span>${t("00:05:16")}</span><span class="who">${t("王效平...等4人正在观看")}</span></div>
      <div class="note">标注文字</div>
      <svg class="cursor" width="13" height="20" viewBox="0 0 13 20" aria-hidden="true"><path d="M1.500 1v15l3.500-3.500 2.500 6 2.500-1-2.500-6H12z" fill="#fff" stroke="#000" /></svg>
    `;
  }
}
